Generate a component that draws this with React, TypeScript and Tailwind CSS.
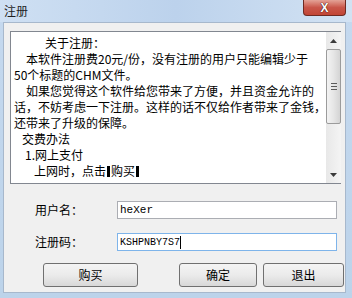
const lines: { text: string; indent: number }[] = [
  { text: '关于注册：', indent: 33 },
  { text: '本软件注册费20元/份，没有注册的用户只能编辑少于', indent: 14 },
  { text: '50个标题的CHM文件。', indent: 2 },
  { text: '如果您觉得这个软件给您带来了方便，并且资金允许的', indent: 14 },
  { text: '话，不妨考虑一下注册。这样的话不仅给作者带来了金钱，', indent: 2 },
  { text: '还带来了升级的保障。', indent: 2 },
  { text: '交费办法', indent: 10 },
  { text: '1.网上支付', indent: 13 },
];

const cjk = { fontFamily: '"Noto Sans CJK SC", "Liberation Sans", sans-serif' };
const mono = { fontFamily: '"Liberation Mono", monospace' };

function Bar() {
  return <span className="inline-block w-[3px] h-[11px] bg-black align-[-1px] mx-[1px]" />;
}

function Button({ label, className }: { label: string; className: string }) {
  return (
    <button
      className={`h-[24px] rounded-[3px] border border-[#707070] bg-gradient-to-b from-[#f4f4f4] via-[#ebebeb] to-[#d8d8d8] text-[12px] text-black ${className}`}
      style={cjk}
    >
      {label}
    </button>
  );
}

export default function App() {
  return (
    <div className="w-[352px] h-[298px] flex flex-col bg-gradient-to-b from-[#c5d9ef] to-[#bcd3ea] overflow-hidden" style={cjk}>
      {/* title bar */}
      <div className="relative h-[22px] shrink-0 bg-gradient-to-r from-[#cfe0f3] via-[#bcd2ec] to-[#d2e2f3]">
        <span className="absolute left-[4px] top-[3px] text-[12px] leading-[16px] text-[#1e1e1e]">注册</span>
        <div className="absolute left-[303px] top-0 w-[43px] h-[16px] rounded-b-[4px] border border-t-0 border-[#6e2a22] bg-gradient-to-b from-[#e3a297] via-[#c9564a] to-[#c14535] flex items-center justify-center">
          <span className="text-white text-[12px] font-bold leading-none [text-shadow:0_0_1px_#3a0c06,0_0_1px_#3a0c06]" style={{ fontFamily: '"Liberation Sans", sans-serif' }}>
            X
          </span>
        </div>
      </div>

      {/* client area */}
      <div className="ml-[3px] mr-[6px] mb-[5px] flex-1 bg-[#f0f0f0] border border-[#a7b8cc] flex flex-col">
        {/* notice box */}
        <div className="ml-[6px] mt-[8px] w-[331px] h-[153px] border border-[#828790] bg-white flex">
          <div className="flex-1 pt-[3px] pl-[1px] text-[12px] leading-[16px] text-black">
            {lines.map((l, i) => (
              <div key={i} className="whitespace-nowrap" style={{ paddingLeft: l.indent }}>
                {l.text}
              </div>
            ))}
            <div className="whitespace-nowrap pl-[22px]">
              上网时，点击<Bar />购买<Bar />
            </div>
          </div>
          {/* scrollbar */}
          <div className="w-[17px] bg-gradient-to-r from-[#e8e8e8] to-[#f4f4f4] flex flex-col items-center">
            <div className="h-[17px] flex items-center justify-center">
              <svg width="7" height="4" viewBox="0 0 7 4">
                <path d="M0 4 L3.5 0 L7 4 Z" fill="#3a3a3a" />
              </svg>
            </div>
            <div className="w-[15px] h-[75px] rounded-[2px] border border-[#9b9b9b] bg-gradient-to-r from-[#f3f3f3] via-[#e6e6e6] to-[#d4d4d4] flex flex-col items-center justify-center gap-[2px]">
              <div className="w-[6px] h-[1px] bg-[#5a5a5a]" />
              <div className="w-[6px] h-[1px] bg-[#5a5a5a]" />
              <div className="w-[6px] h-[1px] bg-[#5a5a5a]" />
            </div>
            <div className="flex-1" />
            <div className="h-[17px] flex items-center justify-center">
              <svg width="7" height="4" viewBox="0 0 7 4">
                <path d="M0 0 L3.5 4 L7 0 Z" fill="#3a3a3a" />
              </svg>
            </div>
          </div>
        </div>

        {/* form */}
        <div className="mt-[17px] flex items-center h-[18px]">
          <span className="ml-[31px] w-[82px] text-[12px] text-black">用户名：</span>
          <div className="w-[220px] h-[18px] border border-[#abadb3] bg-white flex items-center pl-[2px] text-[11px] text-black" style={mono}>
            heXer
          </div>
        </div>
        <div className="mt-[14px] flex items-center h-[18px]">
          <span className="ml-[31px] w-[82px] text-[12px] text-black">注册码：</span>
          <div className="w-[220px] h-[18px] border border-[#7eb4ea] bg-white flex items-center pl-[2px] text-[10px] text-black" style={mono}>
            KSHPNBY7S7
            <span className="inline-block w-[1px] h-[13px] bg-black" />
          </div>
        </div>

        {/* buttons */}
        <div className="mt-[12px] flex">
          <Button label="购买" className="ml-[39px] w-[95px]" />
          <Button label="确定" className="ml-[41px] w-[78px]" />
          <Button label="退出" className="ml-[6px] w-[81px]" />
        </div>
      </div>
    </div>
  );
}
